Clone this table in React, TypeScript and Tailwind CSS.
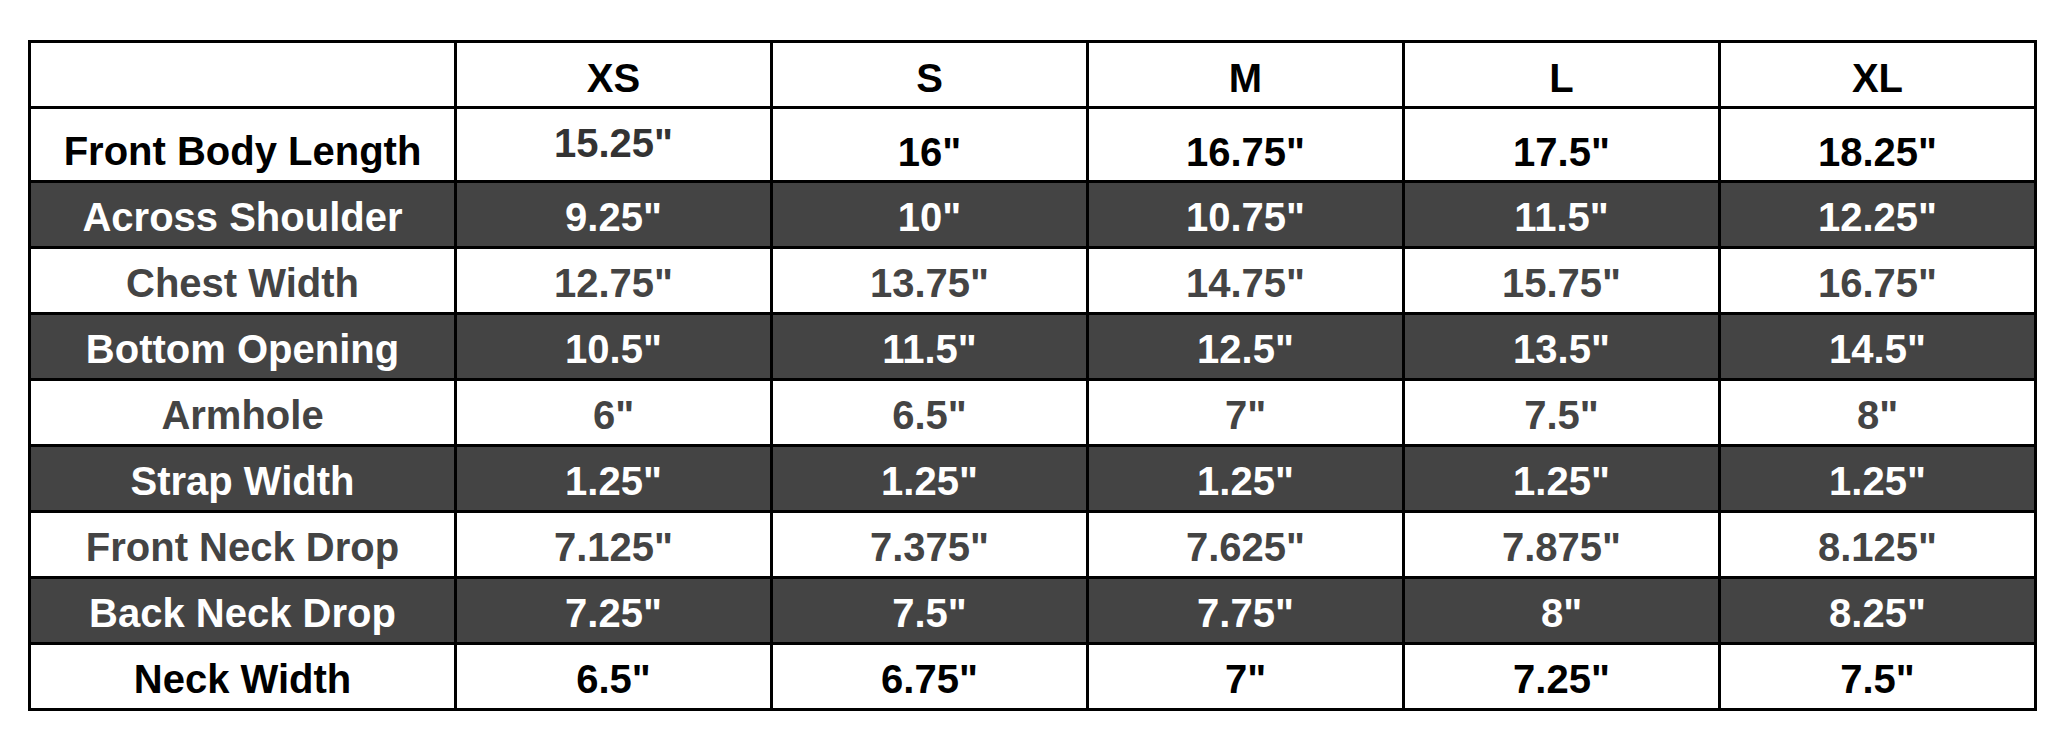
import React from "react";

type Row = { label: string; values: string[]; kind: "black" | "dark" | "gray" };

const rows: Row[] = [
  { label: "Front Body Length", values: ['15.25"', '16"', '16.75"', '17.5"', '18.25"'], kind: "black" },
  { label: "Across Shoulder", values: ['9.25"', '10"', '10.75"', '11.5"', '12.25"'], kind: "dark" },
  { label: "Chest Width", values: ['12.75"', '13.75"', '14.75"', '15.75"', '16.75"'], kind: "gray" },
  { label: "Bottom Opening", values: ['10.5"', '11.5"', '12.5"', '13.5"', '14.5"'], kind: "dark" },
  { label: "Armhole", values: ['6"', '6.5"', '7"', '7.5"', '8"'], kind: "gray" },
  { label: "Strap Width", values: ['1.25"', '1.25"', '1.25"', '1.25"', '1.25"'], kind: "dark" },
  { label: "Front Neck Drop", values: ['7.125"', '7.375"', '7.625"', '7.875"', '8.125"'], kind: "gray" },
  { label: "Back Neck Drop", values: ['7.25"', '7.5"', '7.75"', '8"', '8.25"'], kind: "dark" },
  { label: "Neck Width", values: ['6.5"', '6.75"', '7"', '7.25"', '7.5"'], kind: "black" },
];

const sizes = ["XS", "S", "M", "L", "XL"];

export default function App() {
  return (
    <div
      className="w-[2067px] h-[744px] bg-white pt-[40px] pl-[28px]"
      style={{ fontFamily: '"Liberation Sans", Arial, sans-serif' }}
    >
      <table className="border-collapse border-[3px] border-black table-fixed w-[2006px] font-bold text-[40px] leading-none text-center">
        <colgroup>
          <col className="w-[426px]" />
          <col className="w-[316px]" />
          <col className="w-[316px]" />
          <col className="w-[316px]" />
          <col className="w-[316px]" />
          <col className="w-[316px]" />
        </colgroup>
        <thead>
          <tr className="h-[66px] bg-white text-black">
            <th className="border-[3px] border-black p-0"></th>
            {sizes.map((s) => (
              <th key={s} className="border-[3px] border-black p-0 pt-[6px] font-bold align-middle">
                {s}
              </th>
            ))}
          </tr>
        </thead>
        <tbody>
          {rows.map((r, i) => {
            const first = i === 0;
            const rowCls =
              r.kind === "dark"
                ? "bg-[#444444] text-white"
                : r.kind === "gray"
                ? "bg-white text-[#444444]"
                : "bg-white text-black";
            return (
              <tr key={r.label} className={`${first ? "h-[74px]" : "h-[66px]"} ${rowCls}`}>
                <td className={`border-[3px] border-black p-0 align-middle ${first ? "pt-[12px]" : "pt-[4px]"}`}>
                  {r.label}
                </td>
                {r.values.map((v, j) => (
                  <td
                    key={j}
                    className={`border-[3px] border-black p-0 align-middle ${
                      first ? (j === 0 ? "pb-[4px] text-[#333333]" : "pt-[14px]") : "pt-[4px]"
                    }`}
                  >
                    {v}
                  </td>
                ))}
              </tr>
            );
          })}
        </tbody>
      </table>
    </div>
  );
}
